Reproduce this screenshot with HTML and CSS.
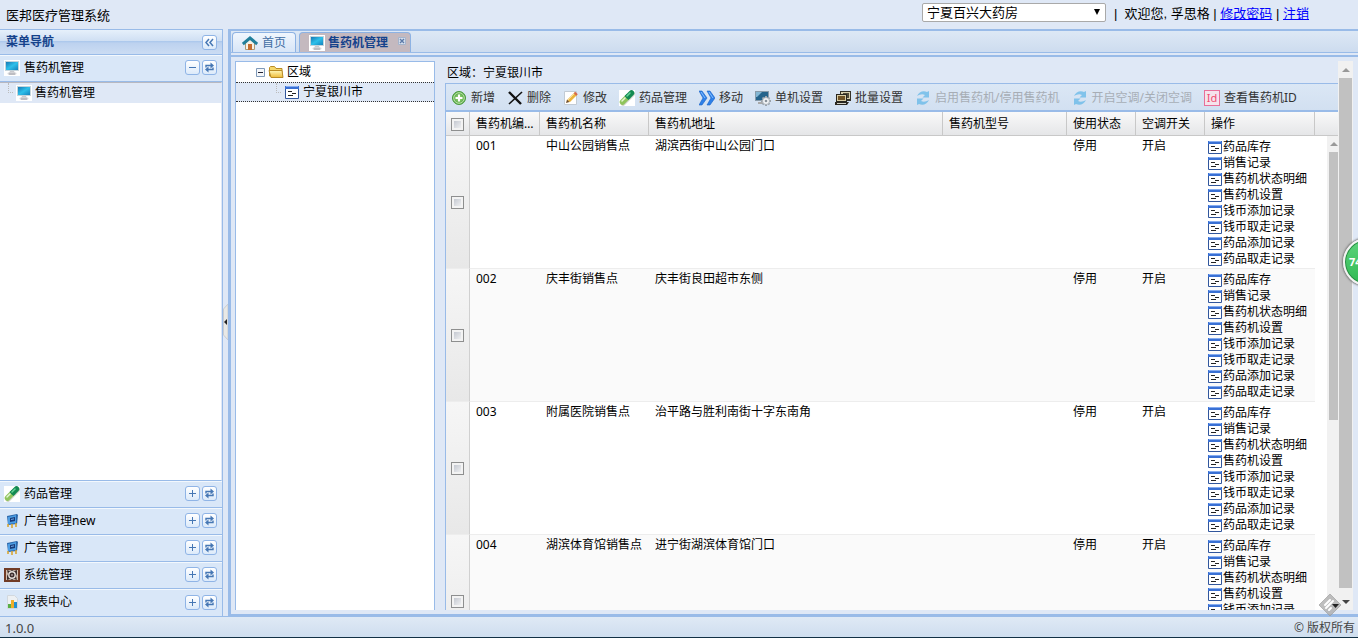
FILE: index.html
```html
<!DOCTYPE html>
<html lang="zh-CN">
<head>
<meta charset="utf-8">
<title>医邦医疗管理系统</title>
<link rel="stylesheet" href="styles.css">
</head>
<body>
<svg class="defs" aria-hidden="true">
  <defs>
    <linearGradient id="scr" x1="0" y1="0" x2="1" y2="1"><stop offset="0" stop-color="#1878b4"/><stop offset=".5" stop-color="#2ec0ea"/><stop offset="1" stop-color="#1583bd"/></linearGradient>
    <linearGradient id="fold" x1="0" y1="0" x2="0" y2="1"><stop offset="0" stop-color="#fff7b8"/><stop offset="1" stop-color="#eebb38"/></linearGradient>
    <radialGradient id="grn"><stop offset="0" stop-color="#a6dc84"/><stop offset="1" stop-color="#4ba03e"/></radialGradient>
  </defs>
  <symbol id="monitor" viewBox="0 0 16 16"><path fill="#fff" d="M0 0h16v16H0z"/><path fill="#c4d4dc" d="M1 1h14v10H1z"/><path fill="url(#scr)" d="M2 2h12v8H2z"/><path fill="#c9c9cd" d="M6 11h4l1 2H5z"/><ellipse cx="8" cy="13.500" rx="4.500" ry="1.500" fill="#d5d5d8"/><path stroke="#a5a5ac" d="M5 14h6"/></symbol>
  <symbol id="pill" viewBox="0 0 16 16"><path fill="#fff" d="M0 0h16v16H0z"/><path stroke="#cfd3c8" stroke-width="5.500" stroke-linecap="round" d="M4 13 13 4"/><path stroke="#8fc45c" stroke-width="5.500" stroke-linecap="round" d="m3.500 12 4-4"/><path stroke="#138a52" stroke-width="5.500" stroke-linecap="round" d="m9.500 6 3-3"/><path stroke="#138a52" stroke-width="5.500" d="m7.500 8 2-2"/><path stroke="#e5f6d5" stroke-width="1.500" stroke-linecap="round" d="m3 11 3-3"/><path stroke="#66d497" stroke-width="1.500" stroke-linecap="round" d="m8 6 3-3"/></symbol>
  <symbol id="board" viewBox="0 0 16 16"><path fill="#2b66a9" d="m3 3 10-2 1 1-1 9-9 1z"/><path fill="#4c9de3" d="m4 4 8-2v8l-8 1z"/><path fill="#183a78" d="m6 5 5-1v4L6 9z"/><path stroke="#6fa8e6" d="m7 6.500 3-.600"/><path stroke="#d7a735" stroke-width="1.600" d="M4 11v3m4-3v4m4-5v4"/></symbol>
  <symbol id="gear" viewBox="0 0 16 16"><path fill="#713c26" d="M0 1h16v14H0z"/><path fill="#d4c1b2" d="M2 3h12v10H2z"/><path fill="#3c302e" d="m3 3 3 1 2-1 2 1 3-1v4l-1 2 1 4-3-1-2 1-2-1-3 1V9l1-2z"/><circle cx="8" cy="8" r="3.200" fill="none" stroke="#e6e1dc" stroke-width="1.400"/><circle cx="8" cy="8" r="1" fill="#a99"/></symbol>
  <symbol id="chart" viewBox="0 0 16 16"><path fill="#edf0f3" stroke="#d2d8de" d="M3.500 1.500h7l3 3v10h-10z"/><path fill="#58af45" d="M4 10h3v4H4z"/><path fill="#f0ae29" d="M7 6h3v8H7z"/><path fill="#2390d2" d="M10 8h3v6h-3z"/></symbol>
  <symbol id="home" viewBox="0 0 16 16"><path fill="#f5f2e8" stroke="#ad9b78" d="M3.500 8 8 4l4.500 4v6.500h-9z"/><path fill="#c56c2e" d="M6 9h4v6H6z"/><path fill="none" stroke="#217f9b" stroke-width="3" d="M.800 9 8 3l7.200 6"/></symbol>
  <symbol id="folder" viewBox="0 0 16 16"><path fill="#f5d76b" stroke="#b98b25" d="M1.500 12V3.500l1-1h4l1.500 2h6v8z"/><path fill="url(#fold)" stroke="#b98b25" d="M1 6.500h13l1 7H3z"/></symbol>
  <symbol id="form" viewBox="0 0 16 16"><path fill="#fff" stroke="#31569c" d="M1.500 2.500h13v12h-13z"/><path fill="#3970d4" d="M1 2h14v3H1z"/><path stroke="#85acf0" d="M2 2.500h12"/><path stroke="#222" d="M4 7.500h4m0 2h4m-8 2h5"/></symbol>
  <symbol id="add" viewBox="0 0 16 16"><circle cx="8" cy="8" r="6.500" fill="url(#grn)" stroke="#4a9b3d"/><circle cx="8" cy="8" r="5.300" fill="none" stroke="#bfe5aa"/><path stroke="#fff" stroke-width="2" d="M4.500 8h7M8 4.500v7"/></symbol>
  <symbol id="cross" viewBox="0 0 16 16"><path stroke="#111" stroke-width="2.400" d="m2 2 12 12"/><path stroke="#111" stroke-width="1.600" d="M15 2 2 14"/></symbol>
  <symbol id="edit" viewBox="0 0 16 16"><path fill="#fff" stroke="#c2cbd4" d="M1.500 1.500h12v13h-12z"/><path stroke="#eab43e" stroke-width="3.500" d="M5.500 11 13 3.500"/><path stroke="#fbdf94" d="m5 10 7-7"/><path fill="#704d29" d="m3 13 1-3.500L6.500 12z"/><path stroke="#d4684d" stroke-width="3.500" d="m12 4.500 1.500-1.500"/></symbol>
  <symbol id="move" viewBox="0 0 16 16"><path fill="#2d80e9" stroke="#1862c4" stroke-width=".600" d="M0 1h3l5 7-5 7H0l4-7zm8 0h3l5 7-5 7H8l4-7z"/><path fill="none" stroke="#86c0ff" d="m2 2 4 6m4-6 4 6"/></symbol>
  <symbol id="setone" viewBox="0 0 16 16"><path fill="#879baa" d="M0 1h14v10H0z"/><path fill="#24648c" d="M1 2h12v8H1z"/><path fill="#83b7d4" d="M1 2h6L2 7H1z"/><path fill="#a9a9a9" d="M3 12h5v2H3z"/><path stroke="#9aa3ab" stroke-width="2" d="M11 6v10M6 11h10M7.500 7.500l7 7m0-7-7 7"/><circle cx="11" cy="11" r="3.500" fill="#f4f6f8" stroke="#a9b0b7"/><circle cx="11" cy="11" r="1.300" fill="#8b949c"/></symbol>
  <symbol id="setall" viewBox="0 0 16 16"><path fill="#353229" d="M5 1h11v10H5z"/><path fill="#d8cfae" d="M6 2h9v7H6z"/><path fill="#514b38" d="M8 3h6v5H8z"/><path fill="#292720" d="M1 4h11v8H1z"/><path fill="#d8cda5" d="M2 5h9v6H2z"/><path fill="#705326" d="M3 6h7v4H3z"/><path fill="#292720" d="M0 12h14l-2 3H0z"/><path stroke="#d2d0c6" d="M2 13.500h9"/></symbol>
  <symbol id="sync" viewBox="0 0 16 16"><path fill="#2da3e4" d="M2 6C4 2 8 0 12 2l2-1v6.500H7.500L10 5C7 3.500 5 4.500 2 6zm12 4c-2 4-6 6-10 4l-2 1V8.500h6.500L6 11c3 1.500 5 .500 8-1z"/></symbol>
  <symbol id="arrows" viewBox="0 0 13 13"><path fill="none" stroke="#4677b4" stroke-width="1.400" d="M3 6.500V4.500h5M10 6.500v2H5"/><path fill="#4677b4" d="m7.500 1.500 3.500 3-3.500 3zm-2 4v6L2 8.500z"/></symbol>
</svg>

<header class="top">
  <h1 class="top-title">医邦医疗管理系统</h1>
  <div class="top-user">
    <span class="picker"><select class="picker-select" aria-label="药房"><option>宁夏百兴大药房</option></select></span>
    <span>|&nbsp; 欢迎您, 孚思格 | <a href="#">修改密码</a> | <a href="#">注销</a></span>
  </div>
</header>

<div class="main">
  <nav class="side" aria-label="菜单导航">
    <div class="side-head"><h2 class="side-title">菜单导航</h2><button class="tool" aria-label="折叠"><svg viewBox="0 0 13 13"><path fill="none" stroke="#4677b4" stroke-width="1.500" d="M6 3 3 6.500 6 10m4-7L7 6.500l3 3.500"/></svg></button></div>
    <div class="acc"><svg class="ico"><use href="#monitor"/></svg><span class="acc-name">售药机管理</span><button class="tool minus" aria-label="收起"></button><button class="tool" aria-label="刷新"><svg><use href="#arrows"/></svg></button></div>
    <div class="side-body"><a class="side-item" href="#"><span class="elbow"></span><svg class="ico"><use href="#monitor"/></svg>售药机管理</a></div>
    <div class="acc"><svg class="ico"><use href="#pill"/></svg><span class="acc-name">药品管理</span><button class="tool plus" aria-label="展开"></button><button class="tool" aria-label="刷新"><svg><use href="#arrows"/></svg></button></div>
    <div class="acc"><svg class="ico"><use href="#board"/></svg><span class="acc-name">广告管理new</span><button class="tool plus" aria-label="展开"></button><button class="tool" aria-label="刷新"><svg><use href="#arrows"/></svg></button></div>
    <div class="acc"><svg class="ico"><use href="#board"/></svg><span class="acc-name">广告管理</span><button class="tool plus" aria-label="展开"></button><button class="tool" aria-label="刷新"><svg><use href="#arrows"/></svg></button></div>
    <div class="acc"><svg class="ico"><use href="#gear"/></svg><span class="acc-name">系统管理</span><button class="tool plus" aria-label="展开"></button><button class="tool" aria-label="刷新"><svg><use href="#arrows"/></svg></button></div>
    <div class="acc"><svg class="ico"><use href="#chart"/></svg><span class="acc-name">报表中心</span><button class="tool plus" aria-label="展开"></button><button class="tool" aria-label="刷新"><svg><use href="#arrows"/></svg></button></div>
  </nav>

  <div class="split"><button class="split-grip" aria-label="折叠菜单"><svg viewBox="0 0 5 36"><path fill="#e9e9e6" stroke="#c8ccd2" d="M5 0 .500 5v26L5 36z"/><path fill="#222" d="m1 18 3-3v6z"/></svg></button></div>

  <main class="work">
    <div class="tabs">
      <button class="tab"><svg class="ico"><use href="#home"/></svg>首页</button>
      <button class="tab tab-on"><svg class="ico"><use href="#monitor"/></svg>售药机管理<svg class="tab-close" viewBox="0 0 8 8"><path fill="#d5deec" stroke="#a4b4cc" d="M.500.500h7v7h-7z"/><path stroke="#5c7aa8" stroke-width="1.400" d="m2 2 4 4m0-4L2 6"/></svg></button>
    </div>
    <div class="pane">
      <section class="tree" aria-label="区域">
        <div class="tree-row tree-root"><svg class="tree-toggle" viewBox="0 0 9 9"><path fill="#f5f7fa" stroke="#7f99b8" d="M.500.500h8v8h-8z"/><path stroke="#223" d="M2 4.500h5"/></svg><svg class="ico"><use href="#folder"/></svg>区域</div>
        <div class="tree-row tree-leaf"><span class="elbow"></span><svg class="ico"><use href="#form"/></svg>宁夏银川市</div>
      </section>
      <section class="content">
        <p class="region">区域：宁夏银川市</p>
        <div class="bar">
          <button class="act"><svg class="ico"><use href="#add"/></svg>新增</button>
          <button class="act"><svg class="ico"><use href="#cross"/></svg>删除</button>
          <button class="act"><svg class="ico"><use href="#edit"/></svg>修改</button>
          <button class="act"><svg class="ico"><use href="#pill"/></svg>药品管理</button>
          <button class="act"><svg class="ico"><use href="#move"/></svg>移动</button>
          <button class="act"><svg class="ico"><use href="#setone"/></svg>单机设置</button>
          <button class="act"><svg class="ico"><use href="#setall"/></svg>批量设置</button>
          <button class="act" disabled><svg class="ico"><use href="#sync"/></svg>启用售药机/停用售药机</button>
          <button class="act" disabled><svg class="ico"><use href="#sync"/></svg>开启空调/关闭空调</button>
          <button class="act"><span class="ico idmark">Id</span>查看售药机ID</button>
        </div>
        <div class="grid">
          <table class="list">
            <colgroup><col class="c-check"><col class="c-no"><col class="c-name"><col class="c-addr"><col class="c-model"><col class="c-state"><col class="c-state"><col class="c-ops"><col></colgroup>
            <thead><tr><th><input class="box" type="checkbox" aria-label="全选"></th><th>售药机编号</th><th>售药机名称</th><th>售药机地址</th><th>售药机型号</th><th>使用状态</th><th>空调开关</th><th>操作</th><th></th></tr></thead>
            <tbody>
              <tr><td><input class="box" type="checkbox" aria-label="001"></td><td>001</td><td>中山公园销售点</td><td>湖滨西街中山公园门口</td><td></td><td>停用</td><td>开启</td><td><a class="op" href="#"><svg><use href="#form"/></svg>药品库存</a><a class="op" href="#"><svg><use href="#form"/></svg>销售记录</a><a class="op" href="#"><svg><use href="#form"/></svg>售药机状态明细</a><a class="op" href="#"><svg><use href="#form"/></svg>售药机设置</a><a class="op" href="#"><svg><use href="#form"/></svg>钱币添加记录</a><a class="op" href="#"><svg><use href="#form"/></svg>钱币取走记录</a><a class="op" href="#"><svg><use href="#form"/></svg>药品添加记录</a><a class="op" href="#"><svg><use href="#form"/></svg>药品取走记录</a></td><td></td></tr>
              <tr><td><input class="box" type="checkbox" aria-label="002"></td><td>002</td><td>庆丰街销售点</td><td>庆丰街良田超市东侧</td><td></td><td>停用</td><td>开启</td><td><a class="op" href="#"><svg><use href="#form"/></svg>药品库存</a><a class="op" href="#"><svg><use href="#form"/></svg>销售记录</a><a class="op" href="#"><svg><use href="#form"/></svg>售药机状态明细</a><a class="op" href="#"><svg><use href="#form"/></svg>售药机设置</a><a class="op" href="#"><svg><use href="#form"/></svg>钱币添加记录</a><a class="op" href="#"><svg><use href="#form"/></svg>钱币取走记录</a><a class="op" href="#"><svg><use href="#form"/></svg>药品添加记录</a><a class="op" href="#"><svg><use href="#form"/></svg>药品取走记录</a></td><td></td></tr>
              <tr><td><input class="box" type="checkbox" aria-label="003"></td><td>003</td><td>附属医院销售点</td><td>治平路与胜利南街十字东南角</td><td></td><td>停用</td><td>开启</td><td><a class="op" href="#"><svg><use href="#form"/></svg>药品库存</a><a class="op" href="#"><svg><use href="#form"/></svg>销售记录</a><a class="op" href="#"><svg><use href="#form"/></svg>售药机状态明细</a><a class="op" href="#"><svg><use href="#form"/></svg>售药机设置</a><a class="op" href="#"><svg><use href="#form"/></svg>钱币添加记录</a><a class="op" href="#"><svg><use href="#form"/></svg>钱币取走记录</a><a class="op" href="#"><svg><use href="#form"/></svg>药品添加记录</a><a class="op" href="#"><svg><use href="#form"/></svg>药品取走记录</a></td><td></td></tr>
              <tr><td><input class="box" type="checkbox" aria-label="004"></td><td>004</td><td>湖滨体育馆销售点</td><td>进宁街湖滨体育馆门口</td><td></td><td>停用</td><td>开启</td><td><a class="op" href="#"><svg><use href="#form"/></svg>药品库存</a><a class="op" href="#"><svg><use href="#form"/></svg>销售记录</a><a class="op" href="#"><svg><use href="#form"/></svg>售药机状态明细</a><a class="op" href="#"><svg><use href="#form"/></svg>售药机设置</a><a class="op" href="#"><svg><use href="#form"/></svg>钱币添加记录</a><a class="op" href="#"><svg><use href="#form"/></svg>钱币取走记录</a><a class="op" href="#"><svg><use href="#form"/></svg>药品添加记录</a><a class="op" href="#"><svg><use href="#form"/></svg>药品取走记录</a></td><td></td></tr>
            </tbody>
          </table>
          <div class="scroll scroll-in"><span class="scroll-up"></span><span class="thumb-in"></span></div>
        </div>
      </section>
      <div class="scroll scroll-out"><span class="scroll-up"></span><span class="thumb-out"></span><span class="scroll-down"></span></div>
    </div>
  </main>
</div>

<footer class="foot"><span>1.0.0</span><span>© 版权所有</span></footer>
<div class="speed">74</div>
<svg class="stamp" viewBox="0 0 24 24" aria-hidden="true"><path fill="#aaa" fill-opacity=".75" stroke="#999" stroke-opacity=".6" stroke-linejoin="round" d="M12 1 23 12 12 23 1 12z"/><path fill="none" stroke="#fff" stroke-width="2" stroke-linecap="round" d="m7 12 5-5m-4 8 7-7m-4 9 2-2"/><path fill="#222" d="M14 11h7l-3.500 4z"/></svg>
</body>
</html>
```

FILE: styles.css
```css
* { box-sizing: border-box; }
body {
  display: flex;
  flex-direction: column;
  height: 100vh;
  margin: 0;
  overflow: hidden;
  background: #dfe8f6;
  color: #000;
  font: 12px/16px "Noto Sans", "Noto Sans CJK SC", sans-serif;
}
button { font: inherit; color: inherit; padding: 0; }
.defs { position: absolute; width: 0; height: 0; }
.ico { flex: none; width: 16px; height: 16px; }

.top {
  flex: none;
  display: flex;
  justify-content: space-between;
  height: 29px;
  padding: 3px 49px 0 6px;
  font-size: 13px;
}
.top-title { margin: 0; padding-top: 2px; font-size: 13px; font-weight: normal; line-height: 20px; }
.top-user {
  display: flex;
  gap: 8px;
  font-family: "Liberation Sans", "Noto Sans CJK SC", sans-serif;
  line-height: 22px;
  white-space: nowrap;
}
.top-user a { color: #00f; }
.picker { position: relative; height: 19px; }
.picker::after {
  content: "";
  position: absolute;
  top: 6px;
  right: 6px;
  border: 3px solid transparent;
  border-top: 6px solid #000;
  border-bottom: 0;
}
.picker-select {
  display: block;
  width: 184px;
  height: 19px;
  padding: 0 4px;
  border: 1px solid #a9a9a9;
  border-radius: 2px;
  background: #fff;
  appearance: none;
  font: inherit;
  line-height: 17px;
}

.main { flex: 1; display: flex; min-height: 0; }
.side {
  flex: none;
  display: flex;
  flex-direction: column;
  width: 223px;
  border: solid #99bbe8;
  border-width: 1px 1px 1px 0;
}
.side-head, .acc { flex: none; display: flex; align-items: center; }
.side-head {
  justify-content: space-between;
  height: 25px;
  padding: 0 5px 0 6px;
  border-bottom: 1px solid #99bbe8;
  background: linear-gradient(#e6f0fb, #cfdff3 46%, #a9c6ec 46%, #bdd2ef 55%, #cbdcf3);
}
.side-title { margin: 0; font-size: 12px; color: #15428b; }
.acc {
  gap: 2px;
  height: 27px;
  padding: 0 5px 2px 4px;
  border-top: 1px solid #f3f8fd;
  border-bottom: 1px solid #99bbe8;
  background: #d9e7f8;
}
.acc .ico { margin-right: 2px; }
.side .acc:last-child { border-bottom: 0; }
.acc-name { flex: 1; }
.tool {
  flex: none;
  width: 15px;
  height: 15px;
  border: 1px solid #8fb4e6;
  border-radius: 3px;
  background: linear-gradient(#fff, #dceafa);
}
.tool svg { display: block; width: 13px; height: 13px; }
.minus {
  background:
    linear-gradient(#4677b4, #4677b4) center / 7px 1px no-repeat,
    linear-gradient(#fff, #dceafa);
}
.plus {
  background:
    linear-gradient(#4677b4, #4677b4) center / 7px 1px no-repeat,
    linear-gradient(#4677b4, #4677b4) center / 1px 7px no-repeat,
    linear-gradient(#fff, #dceafa);
}
.side-body {
  flex: 1;
  min-height: 0;
  border-top: 1px solid #b8b8c0;
  border-right: 1px solid #dfe8f6;
  border-bottom: 1px solid #99bbe8;
  background: #fff;
}
.side-item {
  display: flex;
  align-items: center;
  gap: 3px;
  height: 20px;
  padding-left: 8px;
  background: #dfe8f6;
  color: #000;
  text-decoration: none;
}
.elbow {
  flex: none;
  align-self: flex-start;
  width: 5px;
  height: 10px;
  border: 1px dotted #bbb;
  border-width: 0 0 1px 1px;
}

.split { position: relative; flex: none; width: 5px; border-bottom: 1px solid #99bbe8; }
.split-grip { position: absolute; top: 275px; left: 0; width: 5px; height: 36px; border: 0; background: none; }
.split-grip svg { display: block; width: 5px; height: 36px; }

.work {
  flex: 1;
  display: flex;
  flex-direction: column;
  min-width: 0;
  border: solid #99bbe8;
  border-width: 2px 0 3px 3px;
}
.tabs {
  flex: none;
  display: flex;
  gap: 3px;
  height: 25px;
  padding: 1px 1px 3px;
  border-bottom: 1px solid #99bbe8;
  background: linear-gradient(#dde8f5, #cddcef 21px, #99bbe8 21px, #99bbe8 22px, #dfe8f6 22px);
}
.tab {
  display: flex;
  align-items: center;
  gap: 4px;
  height: 20px;
  padding: 0 9px;
  border: 1px solid #8db2e3;
  border-bottom: 0;
  border-radius: 4px 4px 0 0;
  background: linear-gradient(#f0f6fd, #d7e5f7);
  color: #416da3;
}
.tab-on {
  gap: 3px;
  padding-right: 4px;
  background: #c4b9bf;
  color: #15428b;
  font-weight: bold;
}
.tab-close { width: 8px; height: 8px; margin: 0 0 4px 7px; }
.pane {
  flex: 1;
  display: flex;
  min-height: 0;
  padding: 4px 5px 4px 4px;
  border-top: 1px solid #99bbe8;
}
.tree { flex: none; width: 200px; border: solid #99bbe8; border-width: 1px 1px 0; background: #fff; }
.tree-row { display: flex; align-items: center; gap: 3px; height: 20px; }
.tree-root { padding-left: 20px; }
.tree-toggle { width: 9px; height: 9px; }
.tree-leaf { padding-left: 40px; border: dotted #333; border-width: 1px 0; background: #dfe8f6; }

.content { flex: 1; display: flex; flex-direction: column; min-width: 0; margin-left: 10px; }
.region { margin: 0; padding: 4px 2px 2px; }
.bar {
  flex: none;
  display: flex;
  align-items: center;
  gap: 12px;
  height: 29px;
  padding: 1px 0 0 5px;
  overflow: hidden;
  border: solid #99bbe8;
  border-width: 1px 0 2px 1px;
  background: linear-gradient(#dbe7f5, #d2e0f1);
}
.act { flex: none; display: flex; align-items: center; gap: 4px; border: 0; background: none; color: #333; white-space: nowrap; }
.act:disabled { opacity: .5; color: #777; }
.idmark {
  border: 1px solid #e8709a;
  background: #f5e3ec;
  color: #ef4d71;
  font-size: 11px;
  line-height: 14px;
}
.grid { position: relative; flex: 1; min-height: 0; overflow: hidden; border-left: 1px solid #99bbe8; background: #fff; }
.list { width: 100%; border-collapse: separate; border-spacing: 0; table-layout: fixed; }
.c-check { width: 24px; }
.c-no { width: 70px; }
.c-name { width: 109px; }
.c-addr { width: 294px; }
.c-model { width: 124px; }
.c-state { width: 69px; }
.c-ops { width: 110px; }
.list th {
  height: 24px;
  padding: 0 5px 0 6px;
  overflow: hidden;
  border-right: 1px solid #c8c8c8;
  border-bottom: 1px solid #c8c8c8;
  background: linear-gradient(#f9f9f9, #e5e6e8);
  font-weight: normal;
  text-align: left;
  text-overflow: ellipsis;
  white-space: nowrap;
}
.list th:last-child { border-right: 0; }
.list td {
  height: 133px;
  padding: 2px 0 1px 6px;
  border-bottom: 1px solid #ededed;
  vertical-align: top;
  white-space: nowrap;
}
.list tr:nth-child(even) td { background: #fafafa; }
.list tr td:last-child { border-bottom: 0; background: #fff; }
.list td:nth-child(8) { padding: 3px 0 0 2px; }
.list tr th:first-child, .list tr td:first-child { padding: 0; text-align: center; vertical-align: middle; }
.list tr td:first-child { border-right: 1px solid #d0d0d0; background: linear-gradient(#f6f6f6, #e8e8e8); }
.box {
  display: inline-block;
  width: 13px;
  height: 13px;
  margin: 0;
  border: 1px solid #8e8f8f;
  background: linear-gradient(135deg, #b9bec8, #fafafa);
  box-shadow: inset 0 0 0 2px #f3f3f3;
  appearance: none;
  vertical-align: middle;
}
.op { display: flex; align-items: center; height: 16px; color: #000; text-decoration: none; }
.op svg { flex: none; width: 16px; height: 16px; }

.scroll { display: flex; flex-direction: column; align-items: center; background: #f1f1f1; }
.scroll-in { position: absolute; top: 24px; right: 0; bottom: 0; width: 11px; align-items: flex-end; }
.scroll-out { flex: none; width: 15px; }
.scroll-up, .scroll-down { width: 0; height: 0; margin: 7px 3px 6px; border: 4px solid transparent; }
.scroll-in .scroll-up { margin: 6px 0 5px; }
.scroll-up { border-top: 0; border-bottom-color: #999; }
.scroll-down { border-bottom: 0; border-top-color: #444; }
.thumb-in { flex: none; width: 9px; height: 268px; margin-top: 1px; background: #c1c1c1; }
.thumb-out { flex: 1; width: 13px; margin-bottom: 5px; background: #c1c1c1; }

.foot {
  flex: none;
  display: flex;
  justify-content: space-between;
  height: 21px;
  padding: 1px 3px 0 5px;
  border-bottom: 1px solid #123044;
  background: linear-gradient(#dfe9f5, #cfdeef);
  color: #444;
  line-height: 20px;
}
.foot span:first-child { font-size: 13px; }
.speed {
  position: absolute;
  top: 238px;
  right: -33px;
  width: 48px;
  height: 48px;
  padding-left: 4px;
  border: 2px solid #f3f3f3;
  border-radius: 50%;
  background: linear-gradient(#5ed47b, #2fb953);
  box-shadow: inset 0 0 0 1px #2b8a44, 0 0 2px 1px #777;
  color: #fff;
  font-size: 11px;
  font-weight: bold;
  line-height: 44px;
}
.stamp { position: absolute; right: 16px; bottom: 21px; width: 24px; height: 24px; }
```
